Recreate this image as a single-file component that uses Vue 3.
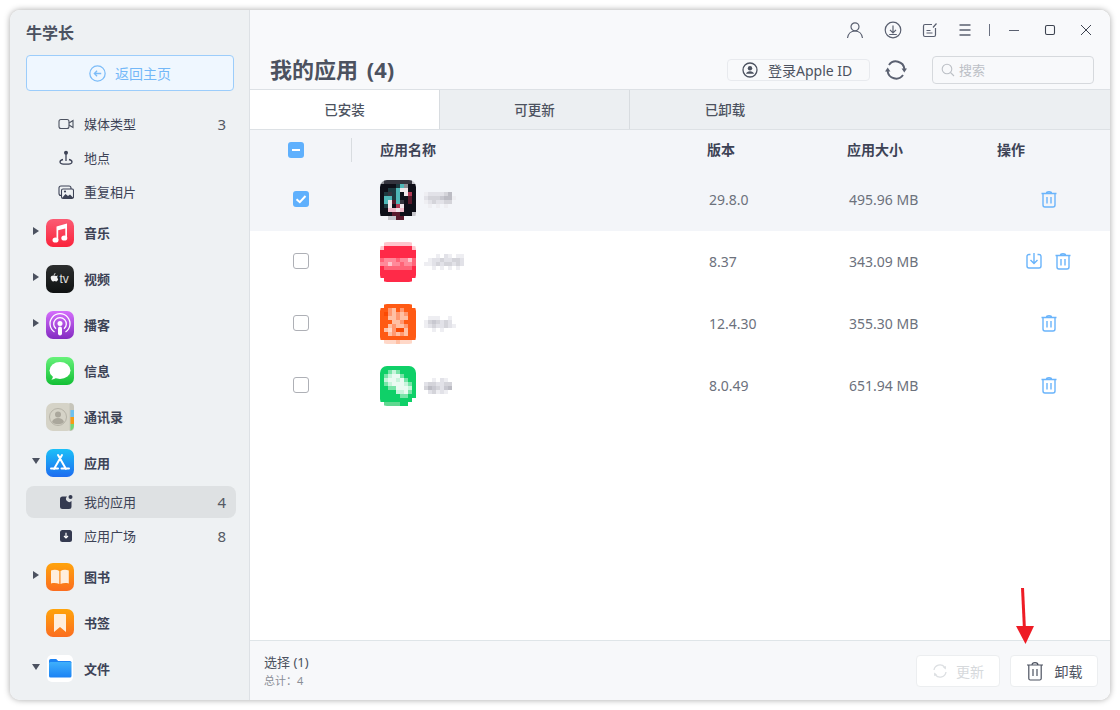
<template>
  <div class="window">
    <aside class="sidebar">
      <div class="brand">牛学长</div>
      <button class="home-btn">
        <svg width="17" height="17" viewBox="0 0 16 16" fill="none" stroke="#7cbcf8" stroke-width="1.2">
          <circle cx="8" cy="8" r="7.2" />
          <path d="M11.5 8H5M7.6 5.4 5 8l2.6 2.6" />
        </svg>
        <span>返回主页</span>
      </button>
      <nav class="nav">
        <template v-for="item in navItems" :key="item.label">
          <div v-if="item.sub" class="sub-item" :class="{ active: item.active }">
            <svg class="sub-icon" width="16" height="16" viewBox="0 0 16 16" v-html="icons[item.icon]"></svg>
            <span class="sub-label">{{ item.label }}</span>
            <span class="count">{{ item.count }}</span>
          </div>
          <div v-else class="main-item">
            <span class="caret-box"><i v-if="item.caret" :class="'caret-' + item.caret"></i></span>
            <svg class="app-icon" width="28" height="28" viewBox="0 0 28 28" v-html="icons[item.icon]"></svg>
            <span class="main-label">{{ item.label }}</span>
          </div>
        </template>
      </nav>
    </aside>

    <main class="content">
      <div class="toolbar">
        <svg width="18" height="18" viewBox="0 0 18 18" fill="none" stroke="#5a6070" stroke-width="1.2">
          <circle cx="9" cy="5.8" r="4" />
          <path d="M1.5 17c.6-4 3.5-7 7.5-7s6.9 3 7.5 7" />
        </svg>
        <svg width="18" height="18" viewBox="0 0 18 18" fill="none" stroke="#5a6070" stroke-width="1.2">
          <circle cx="9" cy="9" r="7.8" />
          <path d="M9 4.5v7M6 8.8l3 3 3-3M5.2 13.5h7.6" />
        </svg>
        <svg width="16" height="16" viewBox="0 0 16 16" fill="none" stroke="#5a6070" stroke-width="1.2">
          <path d="M10 2.5H3A1.5 1.5 0 0 0 1.500 4v9A1.500 1.500 0 0 0 3 14.500h9a1.500 1.500 0 0 0 1.500-1.500V6M11 5.500l3.500-4M4.500 8.500h4M4.500 11h6" />
        </svg>
        <svg width="14" height="14" viewBox="0 0 14 14" fill="none" stroke="#5a6070" stroke-width="1.4">
          <path d="M1.500 2h11M1.500 7h11M1.500 12h11" />
        </svg>
        <i class="tool-sep"></i>
        <svg class="min-icon" width="12" height="12" viewBox="0 0 12 12" fill="none" stroke="#5a6070" stroke-width="1">
          <path d="M1 6.500h10" />
        </svg>
        <svg class="max-icon" width="12" height="12" viewBox="0 0 12 12" fill="none" stroke="#3d4350" stroke-width="1.1">
          <rect x="1.500" y="1.500" width="9" height="9" rx="1.500" />
        </svg>
        <svg class="close-icon" width="12" height="12" viewBox="0 0 12 12" fill="none" stroke="#3d4350" stroke-width="1">
          <path d="M1 1l10 10M11 1 1 11" />
        </svg>
      </div>

      <div class="title-row">
        <h1>我的应用 (4)</h1>
        <div class="apple-btn">
          <svg width="16" height="16" viewBox="0 0 16 16">
            <circle cx="8" cy="8" r="7" fill="none" stroke="#4c5260" stroke-width="1.3" />
            <circle cx="8" cy="6.2" r="2.2" fill="#4c5260" />
            <path d="M4 11.800c.4-1.700 2-2.600 4-2.600s3.600.9 4 2.600z" fill="#4c5260" />
          </svg>
          <span>登录Apple ID</span>
        </div>
        <svg class="refresh" width="22" height="22" viewBox="0 0 22 22" fill="none" stroke="#5a6070" stroke-width="2">
          <path d="M4 6a8.500 8.500 0 0 1 15.400 4M18 16a8.500 8.500 0 0 1-15.400-4" />
          <path d="M16.600 9.500H22l-2.700 4zM0 12.500h5.400l-2.700-4z" fill="#5a6070" stroke="none" />
        </svg>
        <div class="search">
          <svg width="14" height="14" viewBox="0 0 14 14" fill="none" stroke="#bcc0c6" stroke-width="1.1">
            <circle cx="6" cy="6" r="4.8" />
            <path d="M9.500 9.500l3.500 3.500" />
          </svg>
          <span>搜索</span>
        </div>
      </div>

      <div class="tabs">
        <div v-for="(tab, i) in tabs" :key="tab" class="tab" :class="{ active: i === 0 }">{{ tab }}</div>
      </div>

      <div class="table">
        <div class="table-head grid">
          <div class="head-check">
            <span class="check minus"><i></i></span>
            <i class="head-sep"></i>
          </div>
          <div class="head-text">应用名称</div>
          <div class="head-text">版本</div>
          <div class="head-text">应用大小</div>
          <div class="head-text">操作</div>
        </div>
        <div v-for="app in apps" :key="app.version" class="row grid" :class="{ selected: app.checked }">
          <div class="row-check">
            <span class="check" :class="{ on: app.checked }">
              <svg v-if="app.checked" width="16" height="16" viewBox="0 0 16 16" fill="none" stroke="#fff" stroke-width="2">
                <path d="M3.500 8.200 6.800 11.200 12.500 5" />
              </svg>
            </span>
          </div>
          <div class="app-cell">
            <svg class="mosaic icon" :width="app.icon[0].length * 4" :height="app.icon.length * 4" shape-rendering="crispEdges">
              <template v-for="(line, y) in app.icon" :key="y">
                <rect v-for="(c, x) in line" :key="x" :x="x * 4" :y="y * 4" width="4" height="4" :fill="palette[c]" />
              </template>
            </svg>
            <svg class="mosaic name" :width="app.name[0].length * 4" :height="app.name.length * 4" shape-rendering="crispEdges">
              <template v-for="(line, y) in app.name" :key="y">
                <rect v-for="(c, x) in line" :key="x" :x="x * 4" :y="y * 4" width="4" height="4" :fill="palette[c]" />
              </template>
            </svg>
          </div>
          <div class="cell">{{ app.version }}</div>
          <div class="cell">{{ app.size }}</div>
          <div class="actions">
            <svg v-if="app.update" width="18" height="18" viewBox="0 0 18 18" fill="none" stroke="#6ab4fb" stroke-width="1.4">
              <path d="M5.500 2.500H4A2 2 0 0 0 2 4.500V14a2 2 0 0 0 2 2h10a2 2 0 0 0 2-2V4.500a2 2 0 0 0-2-2h-1.500M9 1v10M5.500 8 9 11.500 12.500 8" />
            </svg>
            <svg width="18" height="18" viewBox="0 0 18 18" fill="none" stroke="#6ab4fb" stroke-width="1.4">
              <path d="M1.500 3.500h15M6.500 3.300c0-1 .8-1.600 2.500-1.600s2.500.6 2.500 1.600M3 3.500V15a2 2 0 0 0 2 2h8a2 2 0 0 0 2-2V3.500M7 7v6.500M11 7v6.500" />
            </svg>
          </div>
        </div>
      </div>

      <footer class="footer">
        <div class="summary">
          <div class="picked">选择 (1)</div>
          <div class="total">总计：4</div>
        </div>
        <button class="foot-btn disabled">
          <svg width="16" height="16" viewBox="0 0 16 16" fill="none" stroke="#dcdfe2" stroke-width="1.3">
            <path d="M2 7a6 6 0 0 1 10.500-3M14 9a6 6 0 0 1-10.500 3" />
            <path d="M13.800 6.500 11 4.600l3-1.600zM2.200 9.500 5 11.400 2 13z" fill="#dcdfe2" stroke="none" />
          </svg>
          <span>更新</span>
        </button>
        <button class="foot-btn uninstall">
          <svg width="18" height="20" viewBox="0 0 18 20" fill="none" stroke="#4c5260" stroke-width="1.2">
            <path d="M1 4h16M6 4c0-1.500 1-2.300 3-2.300s3 .8 3 2.300M2.800 4v13.500A1.500 1.500 0 0 0 4.300 19h9.400a1.500 1.500 0 0 0 1.500-1.500V4M7 8v7M11 8v7" />
          </svg>
          <span>卸载</span>
        </button>
      </footer>
    </main>

    <!-- 标注箭头 -->
    <svg class="arrow" width="30" height="60" viewBox="0 0 30 60">
      <path d="M12.500 0 14.500 42" stroke="#ee1c25" stroke-width="3" fill="none" />
      <path d="M6 38H24L15.500 56z" fill="#ee1c25" />
    </svg>
  </div>
</template>

<script setup>
const tabs = ['已安装', '可更新', '已卸载']

const navItems = [
  { label: '媒体类型', sub: true, icon: 'video', count: 3 },
  { label: '地点', sub: true, icon: 'pin' },
  { label: '重复相片', sub: true, icon: 'photos' },
  { label: '音乐', icon: 'music', caret: 'right' },
  { label: '视频', icon: 'tv', caret: 'right' },
  { label: '播客', icon: 'podcast', caret: 'right' },
  { label: '信息', icon: 'message' },
  { label: '通讯录', icon: 'contacts' },
  { label: '应用', icon: 'store', caret: 'down' },
  { label: '我的应用', sub: true, icon: 'myapp', count: 4, active: true },
  { label: '应用广场', sub: true, icon: 'square', count: 8 },
  { label: '图书', icon: 'books', caret: 'right' },
  { label: '书签', icon: 'bookmark' },
  { label: '文件', icon: 'files', caret: 'down' }
]

// 侧边栏图标
const icons = {
  video: '<rect x="1" y="3.500" width="10" height="9" rx="2" fill="none" stroke="#4c5260" stroke-width="1.100"/><path d="M11 7l4-2.500v7L11 9" fill="none" stroke="#4c5260" stroke-width="1.100"/>',
  pin: '<circle cx="8" cy="2.800" r="2" fill="#3d4356"/><path d="M8 4v7" stroke="#3d4356" stroke-width="1.300"/><path d="M5 9.500c-2 .5-3 1.500-3 2.500 0 1.300 2.700 2.200 6 2.200s6-.9 6-2.200c0-1-1-2-3-2.500" fill="none" stroke="#3d4356" stroke-width="1.300"/>',
  photos: '<rect x="1" y="2" width="12" height="9.500" rx="2" fill="none" stroke="#3d4356" stroke-width="1.100"/><rect x="3.500" y="5" width="12" height="9.500" rx="1.500" fill="#eef1f3" stroke="#3d4356" stroke-width="1.100"/><path d="M4 14l3.500-4 2.500 2 2-1.500 3.500 3.500z" fill="#3d4356"/><circle cx="7" cy="7.500" r="1.100" fill="#3d4356"/>',
  myapp: '<path d="M9 2.500H4.500A2.500 2.500 0 0 0 2 5v7.500A2.500 2.500 0 0 0 4.500 15H11a2.500 2.500 0 0 0 2.500-2.500V7A3 3 0 0 1 9 2.500z" fill="#343a50"/><circle cx="12.500" cy="3" r="2" fill="#343a50"/>',
  square: '<rect x="2" y="2" width="12" height="12" rx="2.500" fill="#343a50"/><path d="M8 4.800v5M6 8l2 2 2-2" fill="none" stroke="#fff" stroke-width="1.200"/>',
  music: '<defs><linearGradient id="gm" x1="0" y1="0" x2="0" y2="1"><stop offset="0" stop-color="#fb5c74"/><stop offset="1" stop-color="#fa233b"/></linearGradient></defs><rect width="28" height="28" rx="7" fill="url(#gm)"/><path d="M10.500 7.500 21 4.500V9l-8.800 2.300V21h-1.700zM19.300 9h1.700v10h-1.700z" fill="#fff"/><ellipse cx="9.500" cy="21" rx="3" ry="2.600" fill="#fff"/><ellipse cx="18.300" cy="19" rx="3" ry="2.600" fill="#fff"/>',
  tv: '<defs><linearGradient id="gt" x1="0" y1="0" x2="0" y2="1"><stop offset="0" stop-color="#2c2e2e"/><stop offset="1" stop-color="#0f1212"/></linearGradient></defs><rect width="28" height="28" rx="7" fill="url(#gt)"/><path d="M8 10.500c1 0 1.500.5 2.300.5.500 0 1.100-.5 1.800-.5-.5.500-.9 1-.9 1.800 0 .9.500 1.400 1 1.700-.4 1.200-1.100 2.500-2 2.500-.7 0-.9-.4-1.500-.4s-.9.400-1.500.4c-1.200 0-2.500-2.200-2.500-3.800 0-1.500 1-2.200 2.800-2.200zM9.500 8c0 1-.7 2-1.700 2 0-1 .8-2 1.700-2z" fill="#f2f2f2"/><text x="13.500" y="17.500" font-family="Liberation Sans, sans-serif" font-size="12" fill="#e0e0e0">tv</text>',
  podcast: '<defs><linearGradient id="gp" x1="0" y1="0" x2="0" y2="1"><stop offset="0" stop-color="#d56efc"/><stop offset="1" stop-color="#832bc1"/></linearGradient></defs><rect width="28" height="28" rx="7" fill="url(#gp)"/><path d="M8.500 21A10 10 0 1 1 19.500 21" fill="none" stroke="#fff" stroke-width="1.300"/><path d="M10 17.800a6.300 6.300 0 1 1 8 0" fill="none" stroke="#fff" stroke-width="1.300"/><circle cx="14" cy="12.500" r="2.500" fill="#fff"/><rect x="12" y="15.500" width="4" height="9" rx="2" fill="#fff"/>',
  message: '<defs><linearGradient id="gs" x1="0" y1="0" x2="0" y2="1"><stop offset="0" stop-color="#67f27a"/><stop offset="1" stop-color="#12bf34"/></linearGradient></defs><rect width="28" height="28" rx="7" fill="url(#gs)"/><ellipse cx="14" cy="13.500" rx="10.500" ry="8.500" fill="#fff"/><path d="M7 19c0 1.500-.6 2.800-1.800 3.600 2 0 3.800-.6 5-1.800z" fill="#fff"/>',
  contacts: '<rect width="28" height="28" rx="7" fill="#d5d3c7"/><path d="M24 0h-.5v28h.5a4 4 0 0 0 4-4V4a4 4 0 0 0-4-4z" fill="#c6c5ba"/><rect x="24.500" y="7" width="3.500" height="7" fill="#6cc0ee"/><rect x="24.500" y="14" width="3.500" height="7" fill="#f49b16"/><path d="M24.500 21H28v1a6 6 0 0 1-3.500 5.500z" fill="#74d873"/><circle cx="12" cy="14" r="8.500" fill="none" stroke="#b6b3a8" stroke-width="1"/><circle cx="12" cy="11.500" r="3" fill="#aaa79c"/><path d="M6 19c1-3 3.200-4 6-4s5 1 6 4c-1.500 1.500-3.500 2.200-6 2.200S7.500 20.500 6 19z" fill="#aaa79c"/>',
  store: '<defs><linearGradient id="ga" x1="0" y1="0" x2="0" y2="1"><stop offset="0" stop-color="#1bc0f8"/><stop offset="1" stop-color="#1d6cf0"/></linearGradient></defs><rect width="28" height="28" rx="7" fill="url(#ga)"/><path d="M12 6l8 14M16 6 8 20M5 19.500h7M15.500 19.500H23M12 13.500" fill="none" stroke="#fff" stroke-width="2" stroke-linecap="round"/>',
  books: '<defs><linearGradient id="gb" x1="0" y1="0" x2="0" y2="1"><stop offset="0" stop-color="#ffa40c"/><stop offset="1" stop-color="#fb6d20"/></linearGradient></defs><rect width="28" height="28" rx="7" fill="url(#gb)"/><path d="M5 7.500c3-1 6-.8 8.300.5v13c-2.300-1-5.300-1.200-8.300-.5zM22.800 7.500c-3-1-6-.8-8.300.5v13c2.300-1 5.300-1.200 8.300-.5z" fill="#ffeede"/>',
  bookmark: '<defs><linearGradient id="gk" x1="0" y1="0" x2="0" y2="1"><stop offset="0" stop-color="#ffa40c"/><stop offset="1" stop-color="#fb6d20"/></linearGradient></defs><rect width="28" height="28" rx="7" fill="url(#gk)"/><path d="M9 5h10a1 1 0 0 1 1 1v17l-6-5-6 5V6a1 1 0 0 1 1-1z" fill="#ffeede"/>',
  files: '<defs><linearGradient id="gf" x1="0" y1="0" x2="0" y2="1"><stop offset="0" stop-color="#3fb0fb"/><stop offset="1" stop-color="#1b82f4"/></linearGradient></defs><rect x="1" y="0" width="26" height="27" rx="5" fill="#fff"/><path d="M3 7V5.800A1.800 1.800 0 0 1 4.800 4h5.400l2 2H24a1.500 1.500 0 0 1 1.500 1.500V8H3z" fill="#1b82f4"/><rect x="3" y="7" width="22.500" height="15.500" rx="1.500" fill="url(#gf)"/>'
}

// 打码图标和名称的色块
const palette = {
  '.': 'transparent',
  // 图标
  k: '#0e0f18', K: '#34343e', g: '#8a8c92', s: '#c6c6cc', t: '#4fb8b8', d: '#1d3a40', w: '#f0e6ea', p: '#f0bccb', r: '#5a1a2c', P: '#b03a55',
  R: '#ff2a48', E: '#ffc4cc', F: '#ff8a9a', M: '#ff6478',
  O: '#ff5a14', o: '#ff9870', q: '#ffc0a4', Q: '#ffd8c8', z: '#fb4a04',
  G: '#0fd068', h: '#78e4a8', H: '#c8f4dc', W: '#eafaf2', L: '#60d890',
  // 名称
  a: '#eeeef2', b: '#e2e2e8', c: '#d4d4da', e: '#c8c8d0', x: '#bcbcc4'
}

const apps = [
  {
    version: '29.8.0',
    size: '495.96 MB',
    checked: true,
    icon: [
      'gKKKKKKKs',
      'kkkkdtgkk',
      'kkddtwwkk',
      'kdKdtkwPk',
      'kttdtkkrk',
      'ktwrtKkrk',
      'kdwkPwkkk',
      'kkppwpkkk',
      'kkkrrkkks',
      '..ssrr...'
    ],
    name: [
      'abbbbcx.',
      'bcccexxa',
      'abcbbcc.',
      '.a.a.a..'
    ]
  },
  {
    version: '8.37',
    size: '343.09 MB',
    update: true,
    icon: [
      '.EEEEEEE.',
      'ERRRRRRRE',
      'RRRRRRRRR',
      'RRRRRRRRR',
      'MFFFMFFEM',
      'FFEFFMFFM',
      'RMMMMMMMR',
      'RRRRRRRRR',
      'RRRRRRRRR',
      '.RRRRRRR.'
    ],
    name: [
      '...a.ba.aa.',
      '.abbcbbccb.',
      'aabcbccbcb.',
      '..a.a.a.a..'
    ]
  },
  {
    version: '12.4.30',
    size: '355.30 MB',
    icon: [
      '.OOOOOOO.',
      'OOoqOoOOO',
      'OzoqoqoOO',
      'OOqqoqqOO',
      'OOOqqoOOO',
      'OOqoqqoOO',
      'OqQozzqOO',
      'OOqoqoqOO',
      'OOOOOOOOO',
      '.QQQqQQQ.'
    ],
    name: [
      '.aaa..a.',
      'acecbcb.',
      'abcbbcba',
      '..a.a...'
    ]
  },
  {
    version: '8.0.49',
    size: '651.94 MB',
    icon: [
      'GGGGGGGGG',
      'GGhHhGGGG',
      'GhHWWhGGG',
      'GHWWHWhGG',
      'GhHWWWHhG',
      'GGhhWWWHG',
      'GGGGHHWhG',
      'GGGGGhhGG',
      'GGGGGGGG.',
      '.LLLLGG..'
    ],
    name: [
      '..a.ba..',
      'bccbbcc.',
      'cxecbex.',
      '.bcaba..'
    ]
  }
]
</script>

<style>
html,
body {
  margin: 0;
  background: #fff;
}
</style>

<style scoped>
.window {
  position: relative;
  display: flex;
  width: 1100px;
  height: 690px;
  margin: 10px;
  border-radius: 10px;
  overflow: hidden;
  box-shadow: 0 0 6px rgba(0, 0, 0, 0.35);
  font-family: "Noto Sans", "Noto Sans CJK SC", sans-serif;
  color: #3d4356;
}

.sidebar {
  box-sizing: border-box;
  flex: none;
  width: 240px;
  height: 100%;
  padding-top: 12px;
  background: #eef1f3;
  border-right: 1px solid #dde1e5;
}

.brand {
  margin-left: 16px;
  height: 22px;
  line-height: 22px;
  font-size: 16px;
  font-weight: 700;
  color: #4c5260;
}

.home-btn {
  box-sizing: border-box;
  display: flex;
  align-items: center;
  justify-content: center;
  gap: 9px;
  width: 208px;
  height: 36px;
  margin: 11px 0 0 16px;
  padding: 0;
  border: 1px solid #9ccdfb;
  border-radius: 4px;
  background: #eff7ff;
  font: inherit;
  font-size: 14px;
  color: #74b8f8;
}

.nav {
  margin-top: 17px;
}

.sub-item {
  display: flex;
  align-items: center;
  box-sizing: border-box;
  width: 210px;
  height: 32px;
  margin: 0 0 2px 16px;
  padding: 0 10px 0 32px;
  border-radius: 8px;
}

.sub-item.active {
  background: #dee1e3;
}

.sub-icon {
  flex: none;
  margin-right: 10px;
}

.sub-label {
  flex: 1;
  margin-bottom: 2px;
  font-size: 13px;
}

.count {
  font-size: 15px;
  color: #555a64;
}

.main-item {
  display: flex;
  align-items: center;
  height: 46px;
  margin-left: 16px;
}

.caret-box {
  flex: none;
  display: flex;
  justify-content: center;
  width: 20px;
  margin-bottom: 4px;
}

.caret-right {
  border-left: 6px solid #4c5260;
  border-top: 4px solid transparent;
  border-bottom: 4px solid transparent;
}

.caret-down {
  margin-left: -1px;
  border-top: 6px solid #4c5260;
  border-left: 4px solid transparent;
  border-right: 4px solid transparent;
}

.app-icon {
  flex: none;
  margin-right: 10px;
}

.main-label {
  margin-bottom: 2px;
  font-size: 13px;
  font-weight: 700;
}

.content {
  flex: 1;
  display: flex;
  flex-direction: column;
  min-width: 0;
  background: #fff;
}

.toolbar {
  display: flex;
  align-items: center;
  justify-content: flex-end;
  gap: 20px;
  height: 40px;
  padding-right: 18px;
  background: #f8f9fb;
}

.tool-sep {
  width: 1px;
  height: 12px;
  margin-left: -3px;
  background: #6a7080;
}

.min-icon {
  margin-left: -2px;
}

.max-icon,
.close-icon {
  margin-left: 4px;
}

.title-row {
  box-sizing: border-box;
  display: flex;
  align-items: center;
  height: 40px;
  padding: 0 16px 0 20px;
  background: #f8f9fb;
  border-bottom: 1px solid #dde1e5;
}

.title-row h1 {
  flex: 1;
  margin: 0 0 3px;
  font-size: 22px;
  font-weight: 700;
  word-spacing: 3px;
  color: #4c5260;
}

.apple-btn {
  box-sizing: border-box;
  display: flex;
  align-items: center;
  gap: 10px;
  width: 143px;
  height: 22px;
  padding-left: 14px;
  border: 1px solid #e8eaee;
  border-radius: 4px;
  font-size: 14px;
  color: #4c5260;
}

.refresh {
  margin: 0 25px 0 15px;
}

.search {
  box-sizing: border-box;
  display: flex;
  align-items: center;
  gap: 4px;
  width: 162px;
  height: 28px;
  padding-left: 8px;
  border: 1px solid #d6d9dd;
  border-radius: 4px;
  font-size: 13px;
  color: #bcc0c6;
}

.tabs {
  box-sizing: border-box;
  display: flex;
  height: 40px;
  background: #eceff2;
  border-bottom: 1px solid #dde1e5;
}

.tab {
  box-sizing: border-box;
  width: 190px;
  line-height: 40px;
  text-align: center;
  font-size: 13.5px;
  font-weight: 500;
  color: #4c5260;
  border-right: 1px solid #d8dce0;
}

.tab:last-child {
  border-right: none;
}

.tab.active {
  background: #fff;
}

.table {
  flex: 1;
  min-height: 0;
}

.grid {
  display: grid;
  grid-template-columns: 130px 327px 140px 150px 113px;
  align-items: center;
}

.table-head {
  height: 39px;
  background: #f3f5f9;
  font-size: 14px;
  font-weight: 700;
  color: #3d4356;
}

.head-text {
  margin-bottom: 2px;
}

.head-check {
  display: flex;
  align-items: center;
  height: 100%;
  padding-left: 38px;
}

.head-sep {
  width: 1px;
  height: 24px;
  margin-left: 47px;
  background: #d8dce0;
}

.check {
  box-sizing: border-box;
  flex: none;
  display: flex;
  align-items: center;
  justify-content: center;
  width: 16px;
  height: 16px;
  border: 1px solid #aeb0b6;
  border-radius: 3px;
  background: #fff;
}

.check.on,
.check.minus {
  border: none;
  background: #5fb0fd;
}

.check.minus i {
  width: 8px;
  height: 2px;
  background: #fff;
}

.row {
  box-sizing: border-box;
  height: 62px;
  padding-bottom: 2px;
}

.row.selected {
  background: #f3f5f9;
}

.row-check {
  padding-left: 43px;
}

.app-cell {
  display: flex;
  align-items: center;
  padding-top: 2px;
}

.mosaic {
  flex: none;
  display: block;
}

.mosaic.icon {
  border-radius: 7px;
}

.mosaic.name {
  margin-left: 8px;
}

.cell {
  padding-left: 2px;
  font-size: 14px;
  color: #6c717c;
}

.actions {
  display: flex;
  justify-content: center;
  gap: 11px;
  padding-right: 10px;
}

.footer {
  box-sizing: border-box;
  display: flex;
  align-items: center;
  gap: 10px;
  height: 60px;
  padding: 0 12px 0 14px;
  background: #f7f8fa;
  border-top: 1px solid #dfe5e8;
}

.summary {
  flex: 1;
}

.picked {
  font-size: 13px;
  line-height: 18px;
  color: #4c5260;
}

.total {
  margin-top: 2px;
  font-size: 11px;
  line-height: 16px;
  color: #8a8e96;
}

.foot-btn {
  box-sizing: border-box;
  display: flex;
  align-items: center;
  justify-content: center;
  height: 32px;
  padding: 0;
  border: 1px solid #eceef0;
  border-radius: 4px;
  background: #fff;
  font: inherit;
  font-size: 14px;
  color: #4c5260;
}

.foot-btn.disabled {
  width: 84px;
  gap: 8px;
  color: #d6d9dc;
}

.foot-btn.uninstall {
  width: 88px;
  gap: 11px;
}

.arrow {
  position: absolute;
  left: 1000px;
  top: 578px;
}
</style>
